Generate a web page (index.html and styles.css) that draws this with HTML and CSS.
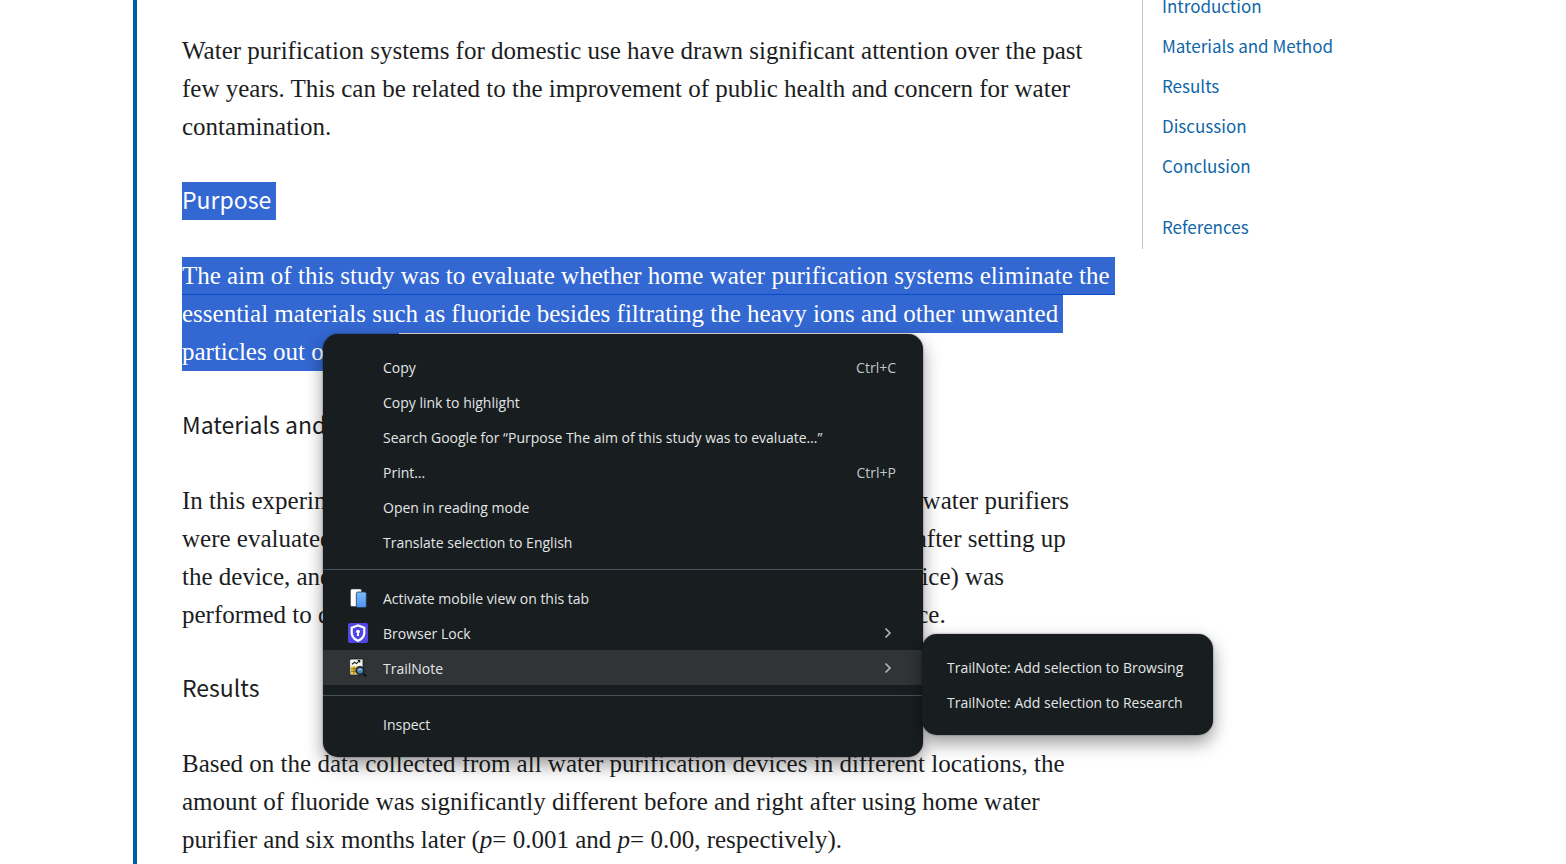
FILE: index.html
```html
<!DOCTYPE html>
<html lang="en">
<head>
<meta charset="utf-8">
<meta name="viewport" content="width=device-width, initial-scale=1">
<title>Home water purification systems</title>
<link rel="stylesheet" href="styles.css">
</head>
<body>
<div class="page">
  <main class="article">
    <p>Water purification systems for domestic use have drawn significant attention over the past<br>few years. This can be related to the improvement of public health and concern for water<br>contamination.</p>
    <h2><mark>Purpose</mark></h2>
    <p><mark class="joined">The aim of this study was to evaluate whether home water purification systems eliminate the</mark><br><mark>essential materials such as fluoride besides filtrating the heavy ions and other unwanted</mark><br><mark>particles out of water</mark></p>
    <h2>Materials and Method</h2>
    <p>In this experimental study, six types of both domestic and imported home water purifiers<br>were evaluated in terms of their fluoride removal rate. Sampling (before, after setting up<br>the device, and six months after the continuous use of the purification device) was<br>performed to determine the amount of fluoride by using a measuring device.</p>
    <h2>Results</h2>
    <p>Based on the data collected from all water purification devices in different locations, the<br>amount of fluoride was significantly different before and right after using home water<br>purifier and six months later (<em>p</em>= 0.001 and <em>p</em>= 0.00, respectively).</p>
  </main>
  <nav class="toc" aria-label="Contents">
    <a href="#introduction">Introduction</a>
    <a href="#method">Materials and Method</a>
    <a href="#results">Results</a>
    <a href="#discussion">Discussion</a>
    <a href="#conclusion">Conclusion</a>
    <a class="toc-refs" href="#references">References</a>
  </nav>
</div>

<div class="menu context-menu" role="menu">
  <button class="item" role="menuitem"><span class="label">Copy</span><kbd>Ctrl+C</kbd></button>
  <button class="item" role="menuitem"><span class="label">Copy link to highlight</span></button>
  <button class="item" role="menuitem"><span class="label">Search Google for “Purpose The aim of this study was to evaluate…”</span></button>
  <button class="item" role="menuitem"><span class="label">Print…</span><kbd>Ctrl+P</kbd></button>
  <button class="item" role="menuitem"><span class="label">Open in reading mode</span></button>
  <button class="item" role="menuitem"><span class="label">Translate selection to English</span></button>
  <hr>
  <button class="item" role="menuitem">
    <svg class="icon" viewBox="0 0 20 20" aria-hidden="true"><defs><linearGradient id="screen" x1="0" y1="0" x2="0" y2="1"><stop stop-color="#7cbcfa"/><stop offset="1" stop-color="#4f92f3"/></linearGradient></defs><rect x="2.500" y="1" width="11" height="17.500" rx="1.500" fill="#fff" stroke="#303a50" stroke-width=".5"/><rect x="8.300" y="4" width="10" height="15.500" rx="1.500" fill="url(#screen)" stroke="#273a5c" stroke-width=".8"/></svg>
    <span class="label">Activate mobile view on this tab</span>
  </button>
  <button class="item" role="menuitem" aria-haspopup="true">
    <svg class="icon" viewBox="0 0 20 20" aria-hidden="true"><rect width="20" height="20" rx="2" fill="#4f46e5"/><path d="M10 1.200 17.400 4V9.500c0 4.500-2.900 7.700-7.400 9.500-4.500-1.800-7.400-5-7.400-9.500V4Z" fill="#fff"/><path d="M10 3.600 15.200 5.600V9.500c0 3.200-2 5.500-5.200 7-3.200-1.500-5.200-3.800-5.200-7V5.600Z" fill="#4f46e5"/><circle cx="10" cy="8.600" r="1.900" fill="#fff"/><path d="M9.400 9h1.200l.5 4H8.900Z" fill="#fff"/></svg>
    <span class="label">Browser Lock</span>
    <svg class="chevron" viewBox="0 0 12 12" aria-hidden="true"><path d="m3.500 1.500 4.500 4.500-4.500 4.500"/></svg>
  </button>
  <div class="branch">
    <button class="item active" role="menuitem" aria-haspopup="true" aria-expanded="true">
      <svg class="icon" viewBox="0 0 20 20" aria-hidden="true"><path d="M1.500 2.500 3 1H15V17H2Z" fill="#f4f4ec" stroke="#181b1d" stroke-width=".8"/><path d="m4 6.300 2.600-2 1.800 1.300 3-2.800M9.800 2.500h1.900v1.900" fill="none" stroke="#171b1e" stroke-width="1.100"/><path d="M3 8.500h8v7.500H3Z" fill="#f5c72f"/><path d="M3 10.900h7M3 13.400h7M6 8.500V16" stroke="#6c5a1c" stroke-width=".7"/><path d="m14.500 15 3.800 3.500" stroke="#11151a" stroke-width="2.200"/><circle cx="12" cy="12.500" r="3.800" fill="#4c7fae" stroke="#16222e" stroke-width="1.500"/><path d="M10.200 12.200q1.800-2 3.600 0" fill="none" stroke="#a9d2ec"/></svg>
      <span class="label">TrailNote</span>
      <svg class="chevron" viewBox="0 0 12 12" aria-hidden="true"><path d="m3.500 1.500 4.500 4.500-4.500 4.500"/></svg>
    </button>
    <div class="menu submenu" role="menu">
      <button class="item" role="menuitem">TrailNote: Add selection to Browsing</button>
      <button class="item" role="menuitem">TrailNote: Add selection to Research</button>
    </div>
  </div>
  <hr>
  <button class="item" role="menuitem"><span class="label">Inspect</span></button>
</div>
</body>
</html>
```
FILE: styles.css
```css
* { box-sizing: border-box; }

body {
  margin: 0;
  background: #fff;
  color: #1c1d1e;
  font-family: "Liberation Serif", serif;
}

.page {
  display: flex;
  align-items: flex-start;
  max-width: 1300px;
  min-height: 100vh;
  margin: 0 auto;
  overflow: hidden;
}

.article {
  flex: 1;
  min-height: 100vh;
  padding: 32px 0 0 45px;
  border-left: 4px solid #005ea5;
}

.article p {
  margin: 0;
  font-size: 25px;
  line-height: 38px;
  white-space: nowrap;
}

.article h2 {
  height: 38px;
  margin: 36px 0 37px;
  font: 400 23px/34px "Noto Sans CJK SC", sans-serif;
}

mark {
  display: inline-block;
  height: 38px;
  padding-right: 5px;
  background: #3367d1;
  color: #fff;
  vertical-align: top;
}

mark.joined { border-bottom: 1px solid #0a49c8; }

.toc {
  display: flex;
  flex-direction: column;
  width: 291px;
  margin-top: -14px;
  padding: 0 0 2px 19px;
  border-left: 1px solid #c4c4c4;
}

.toc a {
  color: #0f66a8;
  font: 17px/40px "Noto Sans CJK SC", sans-serif;
  text-decoration: none;
}

.toc .toc-refs { margin-top: 21px; }

.menu {
  position: absolute;
  border-radius: 15px;
  background: #181d1f;
  box-shadow: 0 8px 18px rgba(0, 0, 0, .4), 0 0 2px rgba(0, 0, 0, .5);
}

.context-menu {
  top: 334px;
  left: 323px;
  width: 600px;
  padding: 15px 0 16px;
}

.item {
  display: flex;
  align-items: center;
  width: 100%;
  height: 35px;
  padding: 0 27px 0 25px;
  border: 0;
  background: none;
  color: #e3e6e7;
  font: 14px/20px "Open Sans", sans-serif;
  text-align: left;
  white-space: nowrap;
}

.item.active { background: #303436; }

.label {
  flex: 1;
  margin-left: 35px;
  padding-top: 2px;
}

.icon {
  width: 20px;
  height: 20px;
}

.icon + .label { margin-left: 15px; }

.item kbd {
  padding-top: 2px;
  color: #c3c7c8;
  font: inherit;
}

.chevron {
  width: 12px;
  height: 12px;
  margin-right: 2px;
  fill: none;
  stroke: #b4b8ba;
  stroke-width: 1.6;
}

.context-menu hr {
  height: 1px;
  margin: 10px 0;
  border: 0;
  background: #46525a;
}

.branch { position: relative; }

.submenu {
  top: -16px;
  left: 599px;
  width: 291px;
  padding: 16px 0 15px;
}
```
